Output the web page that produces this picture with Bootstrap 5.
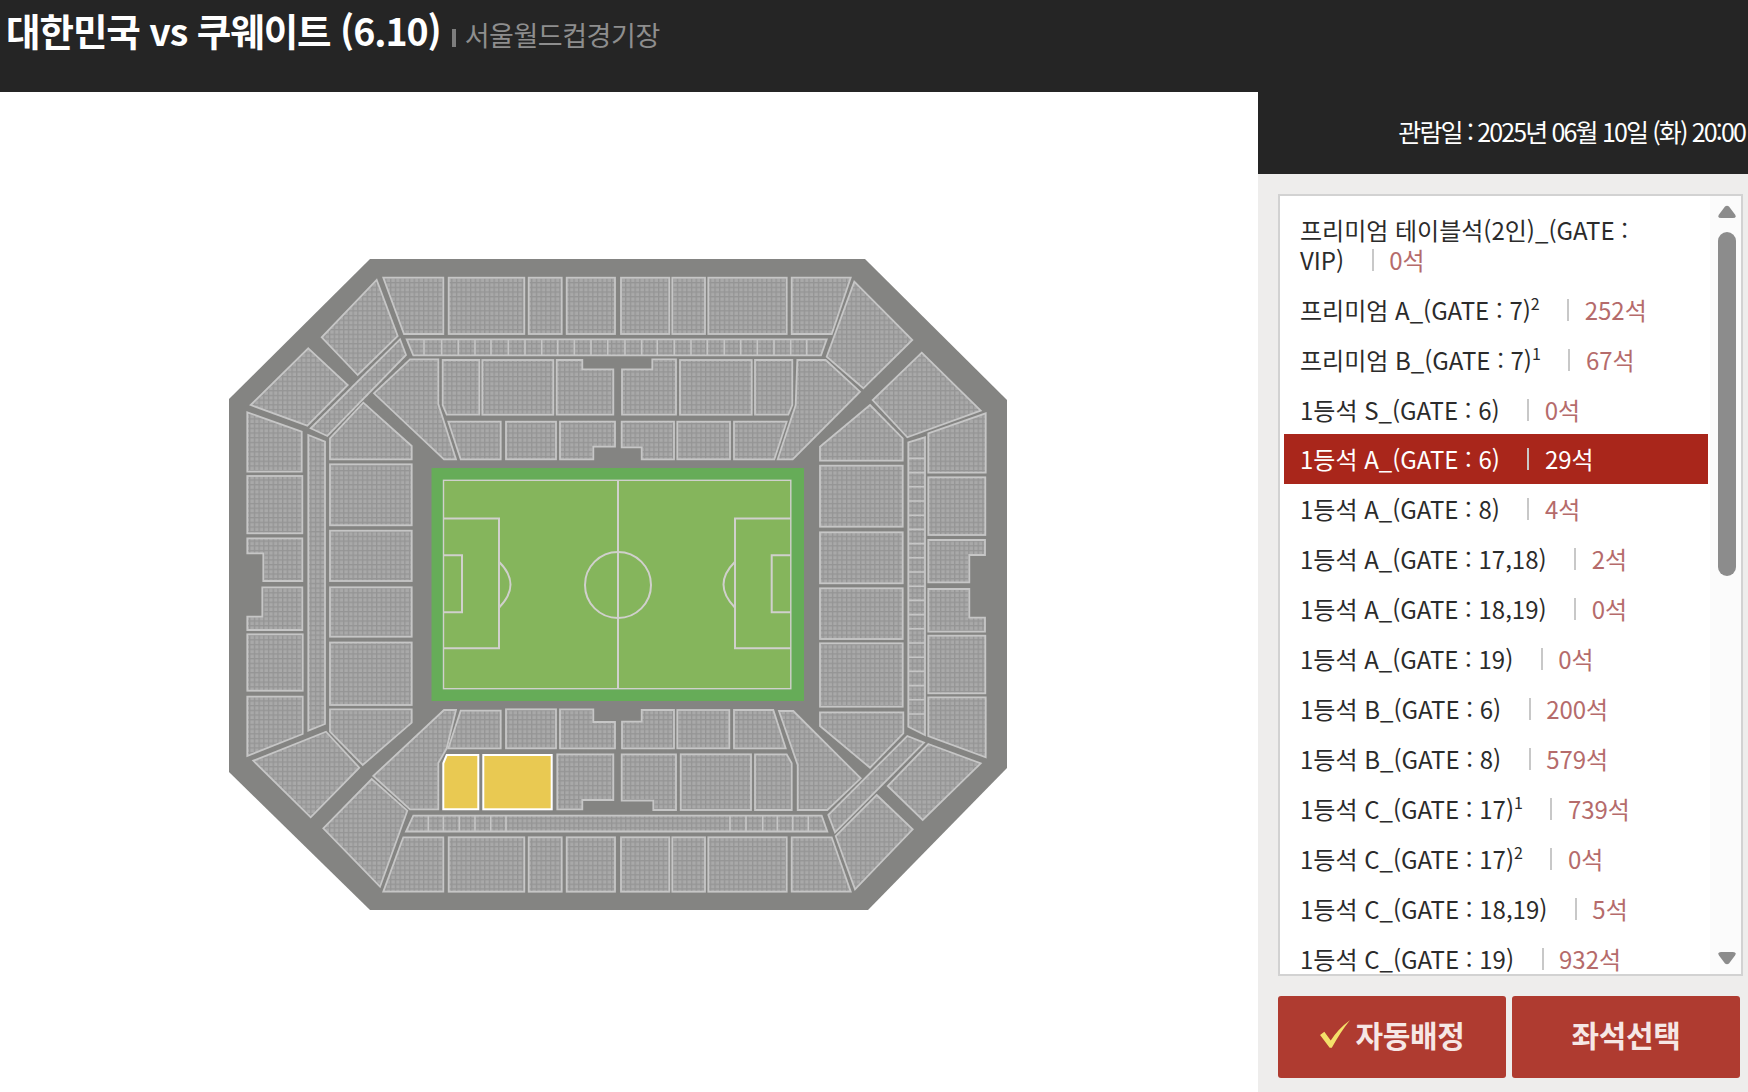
<!DOCTYPE html>
<html lang="ko">
<head>
<meta charset="utf-8">
<title>좌석 선택</title>
<link href="https://cdn.jsdelivr.net/npm/bootstrap@5.3.0/dist/css/bootstrap.min.css" rel="stylesheet">
<style>
html,body{height:100%;overflow:hidden;background:#fff}
body{font-family:"Noto Sans CJK KR","Noto Sans",sans-serif;color:#2b2b2b}
.top-head{height:92px;background:#252525;padding:4px 0 0 6px}
.match-title{font-size:37.5px;font-weight:700;color:#fff;letter-spacing:-1.05px;line-height:52px;margin:0}
.venue-sep{display:inline-block;width:4px;height:18px;background:#7d7d7d;margin:0 9px 0 11px;vertical-align:-1px}
.venue-name{font-size:27px;font-weight:400;color:#8e8e8e;letter-spacing:-.45px}
.work-area{height:1000px}
.map-side{width:1258px}
.map-svg{display:block}
.seat{fill:url(#seats);stroke:#c6c6c6;stroke-width:1.8}
.divs{stroke:#c6c6c6;stroke-width:1.6;fill:none}
.pick{fill:#e9c952;stroke:#fff;stroke-width:2}
.pitch-line{fill:none;stroke:#d0d0cc;stroke-width:2}
.pitch-thin{fill:none;stroke:#d0d0cc;stroke-width:1.4}
.side-panel{width:490px;background:#eeedec}
.date-bar{height:82px;background:#252525;color:#fff;font-size:25px;font-weight:400;letter-spacing:-1.85px;padding:0 3px 0 0;line-height:78px;text-align:right}
.grade-box{margin:20px 5px 0 20px;height:782px;border:2px solid #d2d2d2;background:#fff;overflow:hidden}
.grade-box .list-group{padding:9px 0 0 4px;width:428px;border-radius:0}
.grade-box .list-group-item{border:0;border-radius:0;padding:10px 16px;font-size:24px;line-height:30px;letter-spacing:0;color:#2b2b2b;background:transparent}
.grade-box .list-group-item.active{background:#a9261b;color:#fff}
.grade-box sup{font-size:16px;top:-.65em;letter-spacing:0}
.bar-sep{display:inline-block;width:2px;height:22px;background:#c8c8c8;margin:0 15.500px 0 27.500px;vertical-align:-1px}
.left-cnt{color:#b56b6b}
.active .left-cnt{color:#fff}
.scroll-rail{top:0;right:0;bottom:0;width:31px;background:#fbfbfb}
.arrow-up,.arrow-down{left:8px;width:18px;height:14px}
.arrow-up{top:9px}
.arrow-down{bottom:9px}
.scroll-thumb{left:8px;top:36px;width:18px;height:344px;border-radius:9px;background:#8c8c8c}
.act-row{margin:20px 8px 0 20px;gap:6px}
.act-btn{width:228px;height:82px;border:0;border-radius:3px;background:#af3b30;color:#f6e7e5;font-size:30px;font-weight:700;letter-spacing:-.3px;padding:0 0 7px;line-height:1}
.act-btn:hover,.act-btn:active{background:#af3b30!important;color:#f6e7e5!important}
</style>
</head>
<body>
<header class="top-head">
  <h1 class="match-title">대한민국 vs 쿠웨이트 (6.10)<span class="venue-sep"></span><span class="venue-name">서울월드컵경기장</span></h1>
</header>
<div class="work-area d-flex">
  <main class="map-side">
    <svg class="map-svg" width="1258" height="1000" viewBox="0 92 1258 1000" xmlns="http://www.w3.org/2000/svg" role="img" aria-label="서울월드컵경기장 좌석 배치도">
      <defs>
        <pattern id="seats" width="4.7" height="4.7" patternUnits="userSpaceOnUse">
          <rect width="4.7" height="4.7" fill="#a9a9a9"/>
          <rect width="1.3" height="4.7" fill="#959595"/>
          <rect width="4.7" height="1.3" fill="#959595"/>
        </pattern>
      </defs>
      <polygon points="370,259 865,259 1007,400 1007,768 868,910 370,910 229,772 229,399" fill="#848482"/>

      <!-- upper row, top -->
      <polygon class="seat" points="383.3,277.7 443.3,277.7 443.3,334 404,334"/>
      <rect class="seat" x="448.7" y="277.7" width="75.6" height="56.3"/>
      <rect class="seat" x="528.7" y="277.7" width="33" height="56.3"/>
      <rect class="seat" x="566.7" y="277.7" width="48.3" height="56.3"/>
      <rect class="seat" x="621" y="277.7" width="48.3" height="56.3"/>
      <rect class="seat" x="672.3" y="277.7" width="32.7" height="56.3"/>
      <rect class="seat" x="708.3" y="277.7" width="78.4" height="56.3"/>
      <polygon class="seat" points="791.7,277.7 850.7,277.7 831.7,334 791.7,334"/>
      <!-- top strip -->
      <polygon class="seat" points="406.7,339.3 826.7,339.3 821,355.3 413.3,355.3"/>
      <path class="divs" d="M424 339V355M441.7 339V355M458.3 339V355M475 339V355M491 339V355M508.3 339V355M525 339V355M541.7 339V355M557.7 339V355M574.3 339V355M591 339V355M607.7 339V355M625 339V355M641.7 339V355M657.3 339V355M674.3 339V355M691 339V355M707.3 339V355M724.3 339V355M740.7 339V355M757.3 339V355M774 339V355M790.7 339V355M806.7 339V355"/>
      <!-- top corners -->
      <polygon class="seat" points="376.7,280 397.7,336 357.7,375 321.7,337.3"/>
      <polygon class="seat" points="308.3,348.3 347.7,385 307.3,425.7 250.7,405"/>
      <polygon class="seat" points="400,339.3 406,355 327.3,436 310.7,428.3"/>
      <polygon class="seat" points="854.3,281.7 912.3,340 863.3,388.3 826.7,356.7"/>
      <polygon class="seat" points="921.7,352.7 980.7,410.7 907.3,437.3 872.7,400"/>
      <!-- top middle row -->
      <polygon class="seat" points="410,359.3 438.3,359.3 438.3,404 456,459.3 444,459.3 374,393.3"/>
      <polygon class="seat" points="442.7,360 479.3,360 479.3,414.7 446.7,414.7 442.7,405"/>
      <rect class="seat" x="482.3" y="360" width="71" height="54.7"/>
      <polygon class="seat" points="556.7,360 582.3,360 582.3,369.3 613.3,369.3 613.3,414.7 556.7,414.7"/>
      <polygon class="seat" points="622,369.3 652.3,369.3 652.3,359.3 676,359.3 676,414.7 622,414.7"/>
      <rect class="seat" x="680" y="360" width="71.7" height="54.7"/>
      <polygon class="seat" points="755,360 792.3,360 792.3,405 788.3,414.7 755,414.7"/>
      <polygon class="seat" points="797.3,360 825.7,360 860,391.7 792.7,459.3 777.7,459.3 795.7,405"/>
      <!-- top inner row -->
      <polygon class="seat" points="448.3,421.7 500.7,421.7 500.7,459.3 460.7,459.3"/>
      <rect class="seat" x="506" y="421.7" width="50" height="37.6"/>
      <polygon class="seat" points="560,421.7 615,421.7 615,446.7 593.3,446.7 593.3,459.3 560,459.3"/>
      <polygon class="seat" points="621.7,421.7 674,421.7 674,459.3 641.7,459.3 641.7,447.3 621.7,447.3"/>
      <rect class="seat" x="677.3" y="421.7" width="52.7" height="37.6"/>
      <polygon class="seat" points="734,421.7 786.7,421.7 774.3,459.3 734,459.3"/>

      <!-- left far column -->
      <polygon class="seat" points="247.3,412.3 301.7,431.7 301.7,471.7 247.3,471.7"/>
      <rect class="seat" x="247.3" y="476" width="55" height="57.3"/>
      <polygon class="seat" points="247.3,538.3 302.3,538.3 302.3,581 263.3,581 263.3,553.3 247.3,553.3"/>
      <polygon class="seat" points="262.3,587.3 302.3,587.3 302.3,630 247.3,630 247.3,616.7 262.3,616.7"/>
      <rect class="seat" x="247.3" y="634.3" width="55.4" height="56.4"/>
      <polygon class="seat" points="247.3,696.7 302.7,696.7 302.7,734 247.3,756"/>
      <polygon class="seat" points="308.3,435 325,441.7 325,724 308.3,730.7"/>
      <!-- left inner column -->
      <polygon class="seat" points="363.3,402.7 411.7,446 411.7,459.3 330,459.3 330,438.3"/>
      <rect class="seat" x="330" y="464.3" width="81.7" height="61"/>
      <rect class="seat" x="330" y="530.7" width="81.7" height="50.3"/>
      <rect class="seat" x="330" y="587.3" width="81.7" height="49.4"/>
      <rect class="seat" x="330" y="642.5" width="81.7" height="62.5"/>
      <polygon class="seat" points="330,709.3 411.7,709.3 411.7,722.7 362.7,765 330,731.7"/>

      <!-- right inner column -->
      <polygon class="seat" points="870,405 902.7,438.3 902.7,460.7 820,460.7 820,446.7"/>
      <rect class="seat" x="820" y="465.7" width="82.7" height="61"/>
      <rect class="seat" x="820" y="532.3" width="82.7" height="51"/>
      <rect class="seat" x="820" y="588.3" width="82.7" height="50.7"/>
      <rect class="seat" x="820" y="643.3" width="82.7" height="63.4"/>
      <polygon class="seat" points="820,712.3 903.3,712.3 903.3,733.3 870,767.7 820,726"/>
      <!-- right aisle -->
      <polygon class="seat" points="908.3,442.3 925,437.3 925,735 908.3,726.7"/>
      <path class="divs" d="M908 458.4H925M908 472.6H925M908 486.8H925M908 501H925M908 515.2H925M908 529.4H925M908 543.6H925M908 557.8H925M908 572H925M908 586.2H925M908 600.4H925M908 614.6H925M908 628.8H925M908 643H925M908 657.2H925M908 671.4H925M908 685.6H925M908 699.8H925M908 714H925"/>
      <!-- right far column -->
      <polygon class="seat" points="928.3,433.3 985.7,413.3 985.7,472.7 928.3,472.7"/>
      <rect class="seat" x="928.3" y="477.3" width="57" height="57.7"/>
      <polygon class="seat" points="928.3,540 985,540 985,555 969.3,555 969.3,582.3 928.3,582.3"/>
      <polygon class="seat" points="928.3,589 969.3,589 969.3,617.7 985,617.7 985,631.7 928.3,631.7"/>
      <rect class="seat" x="928.3" y="635.7" width="57" height="57.6"/>
      <polygon class="seat" points="928.3,697.3 985.7,697.3 985.7,757.3 928.3,736"/>

      <!-- bottom corners -->
      <polygon class="seat" points="253.3,760.7 326,731.7 359.3,767.7 310.7,817.3"/>
      <polygon class="seat" points="323.3,828.3 371.7,779 407.3,810.7 380,886.7"/>
      <polygon class="seat" points="373.3,776 444,710 456,710 446.7,748.3 438.3,763 438.3,809.3 410,809.3"/>
      <polygon class="seat" points="928.3,744 980.7,763.3 922.7,820 887.7,786"/>
      <polygon class="seat" points="876.7,795 912.7,829.3 855,889.3 835.7,836"/>
      <polygon class="seat" points="907.3,736 924,742.7 835,832.3 828.3,815"/>
      <polygon class="seat" points="779,711 793.3,711 860.7,778.3 827.3,810 797.7,810 797.7,765"/>
      <!-- bottom inner row -->
      <polygon class="seat" points="460.7,710.7 500.7,710.7 500.7,748.3 448.3,748.3"/>
      <rect class="seat" x="506" y="709.3" width="50" height="39"/>
      <polygon class="seat" points="560,709.3 593.3,709.3 593.3,722 615,722 615,748.3 560,748.3"/>
      <polygon class="seat" points="622,721.7 641.7,721.7 641.7,710 674,710 674,748.3 622,748.3"/>
      <rect class="seat" x="677.3" y="710" width="52" height="38.3"/>
      <polygon class="seat" points="734,710 773.3,710 785.7,748.3 734,748.3"/>
      <!-- bottom middle row -->
      <polygon class="pick" points="446.7,755 478.3,755 478.3,809.3 443.3,809.3 443.3,763.3"/>
      <rect class="pick" x="483.3" y="755" width="68.4" height="54.3"/>
      <polygon class="seat" points="557.3,754.3 613.3,754.3 613.3,800 582.3,800 582.3,809.3 557.3,809.3"/>
      <polygon class="seat" points="621.7,754.3 676,754.3 676,810 653.3,810 653.3,800.7 621.7,800.7"/>
      <rect class="seat" x="680.7" y="754.3" width="70.3" height="55.7"/>
      <polygon class="seat" points="755,754.3 786.7,754.3 791.7,763.3 791.7,810 755,810"/>
      <!-- bottom strip -->
      <polygon class="seat" points="413.3,815.7 821.7,815.7 827.3,831.5 406,831.5"/>
      <path class="divs" d="M428.3 816V831M443.3 816V831M459.3 816V831M475 816V831M490.7 816V831M506 816V831M730 816V831M746 816V831M762.7 816V831M777.3 816V831M792.7 816V831M808.3 816V831"/>
      <!-- bottom row -->
      <polygon class="seat" points="403.3,837.3 443.3,837.3 443.3,891.7 383.3,891.7"/>
      <rect class="seat" x="448.7" y="837.3" width="75.6" height="54.4"/>
      <rect class="seat" x="528.7" y="837.3" width="33" height="54.4"/>
      <rect class="seat" x="566.7" y="837.3" width="48.3" height="54.4"/>
      <rect class="seat" x="621" y="837.3" width="48.3" height="54.4"/>
      <rect class="seat" x="672.3" y="837.3" width="32.7" height="54.4"/>
      <rect class="seat" x="708.3" y="837.3" width="78.4" height="54.4"/>
      <polygon class="seat" points="791.7,837.3 831.7,837.3 850.7,891.7 791.7,891.7"/>

      <!-- pitch -->
      <rect x="431.5" y="468" width="372.5" height="233" fill="#66ac58"/>
      <rect x="443.5" y="480.3" width="347.3" height="208.4" fill="#85b55c"/>
      <rect class="pitch-thin" x="443.5" y="480.3" width="347.3" height="208.4"/>
      <path class="pitch-line" d="M618 480V689"/>
      <circle class="pitch-line" cx="618" cy="585" r="33"/>
      <path class="pitch-line" d="M443.500 518.500H499V648.300H443.500M443.500 555.300H462V612.300H443.500M499 561.700Q522 584.500 499 607.700"/>
      <path class="pitch-line" d="M790.800 518.500H735V648.300H790.800M790.800 555.300H771.700V612.300H790.800M735 561.700Q712 584.500 735 607.700"/>
    </svg>
  </main>
  <aside class="side-panel">
    <div class="date-bar">관람일 : 2025년 06월 10일 (화) 20:00</div>
    <div class="grade-box position-relative">
      <div class="list-group">
        <div class="list-group-item">프리미엄 테이블석(2인)_(GATE :<br>VIP)<span class="bar-sep"></span><span class="left-cnt">0석</span></div>
        <div class="list-group-item">프리미엄 A_(GATE : 7)<sup>2</sup><span class="bar-sep"></span><span class="left-cnt">252석</span></div>
        <div class="list-group-item">프리미엄 B_(GATE : 7)<sup>1</sup><span class="bar-sep"></span><span class="left-cnt">67석</span></div>
        <div class="list-group-item">1등석 S_(GATE : 6)<span class="bar-sep"></span><span class="left-cnt">0석</span></div>
        <div class="list-group-item active">1등석 A_(GATE : 6)<span class="bar-sep"></span><span class="left-cnt">29석</span></div>
        <div class="list-group-item">1등석 A_(GATE : 8)<span class="bar-sep"></span><span class="left-cnt">4석</span></div>
        <div class="list-group-item">1등석 A_(GATE : 17,18)<span class="bar-sep"></span><span class="left-cnt">2석</span></div>
        <div class="list-group-item">1등석 A_(GATE : 18,19)<span class="bar-sep"></span><span class="left-cnt">0석</span></div>
        <div class="list-group-item">1등석 A_(GATE : 19)<span class="bar-sep"></span><span class="left-cnt">0석</span></div>
        <div class="list-group-item">1등석 B_(GATE : 6)<span class="bar-sep"></span><span class="left-cnt">200석</span></div>
        <div class="list-group-item">1등석 B_(GATE : 8)<span class="bar-sep"></span><span class="left-cnt">579석</span></div>
        <div class="list-group-item">1등석 C_(GATE : 17)<sup>1</sup><span class="bar-sep"></span><span class="left-cnt">739석</span></div>
        <div class="list-group-item">1등석 C_(GATE : 17)<sup>2</sup><span class="bar-sep"></span><span class="left-cnt">0석</span></div>
        <div class="list-group-item">1등석 C_(GATE : 18,19)<span class="bar-sep"></span><span class="left-cnt">5석</span></div>
        <div class="list-group-item">1등석 C_(GATE : 19)<span class="bar-sep"></span><span class="left-cnt">932석</span></div>
      </div>
      <div class="scroll-rail position-absolute">
        <svg class="arrow-up position-absolute" viewBox="0 0 18 14"><path d="M7 1.500Q9 0 11 1.500L17 9.500Q19 13 15 13H3Q-1 13 1 9.500Z" fill="#8c8c8c"/></svg>
        <div class="scroll-thumb position-absolute"></div>
        <svg class="arrow-down position-absolute" viewBox="0 0 18 14"><path d="M7 12.500Q9 14 11 12.500L17 4.500Q19 1 15 1H3Q-1 1 1 4.500Z" fill="#8c8c8c"/></svg>
      </div>
    </div>
    <div class="act-row d-flex">
      <button type="button" class="btn act-btn d-flex align-items-center justify-content-center">
        <svg width="32" height="30" viewBox="0 0 30 28" class="me-1" aria-hidden="true"><path d="M1 15 5 12 11 20Q18 9 29 1 20 12 12 27H10Z" fill="#f4e06a"/></svg>자동배정
      </button>
      <button type="button" class="btn act-btn">좌석선택</button>
    </div>
  </aside>
</div>
</body>
</html>
